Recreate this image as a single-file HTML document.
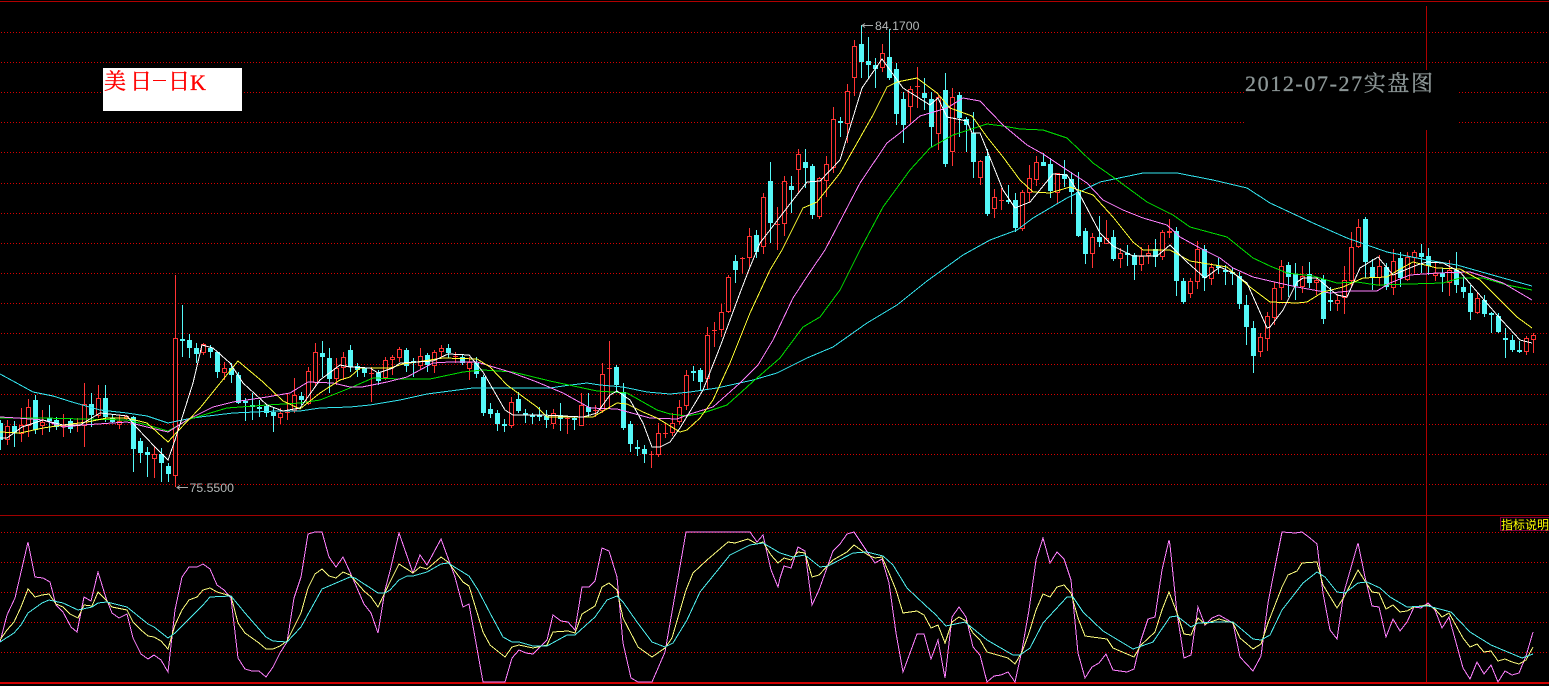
<!DOCTYPE html>
<html>
<head>
<meta charset="utf-8">
<style>
html,body{margin:0;padding:0;background:#000;width:1549px;height:686px;overflow:hidden}
svg{display:block;position:absolute;left:0;top:0}
.l{fill:none;stroke-width:1;shape-rendering:crispEdges}
.s{font-family:"Liberation Sans",sans-serif;font-size:12.3px;fill:#b4b8b8}
</style>
</head>
<body>
<svg width="1549" height="686" viewBox="0 0 1549 686" xmlns="http://www.w3.org/2000/svg">
<rect width="1549" height="686" fill="#000"/>
<g stroke="#d80000" stroke-width="1" stroke-dasharray="1 2" shape-rendering="crispEdges" fill="none">
<path d="M1 32.5H1549M1 62.5H1549M1 92.5H1549M1 122.5H1549M1 152.5H1549M1 183.5H1549M1 213.5H1549M1 243.5H1549M1 273.5H1549M1 303.5H1549M1 333.5H1549M1 364.5H1549M1 394.5H1549M1 424.5H1549M1 454.5H1549M1 484.5H1549M1 532.5H1549M1 562.5H1549M1 592.5H1549M1 622.5H1549M1 652.5H1549"/>
</g>
<path d="M0 1.5H1549" stroke="#b00000" shape-rendering="crispEdges"/>
<path d="M0 515.5H1549" stroke="#a00000" shape-rendering="crispEdges"/>
<rect x="0" y="682" width="1549" height="2" fill="#d00000"/>
<path d="M1426.5 6V682" stroke="#b00000" shape-rendering="crispEdges"/>
<g id="candles" shape-rendering="crispEdges"></g>

<polyline class="l" stroke="#33e6f0" points="0,374 13,381 33,392 53,396 72,402 100,410 127,413 147,416 168,423 187,419 200,417 233,413 277,411 300,411 320,408 350,407 370,405 400,400 427,394 450,391 473,388 550,388 563,386 587,383 600,385 623,387 647,392 670,394 690,392 717,388 753,380 777,373 807,358 833,347 867,323 897,305 927,281 963,255 990,240 1017,230 1033,218 1067,198 1100,182 1143,173 1177,173 1213,180 1247,188 1270,203 1313,223 1347,238 1387,252 1427,260 1457,265 1503,278 1532,286"/>
<polyline class="l" stroke="#00e000" points="0,418 43,418 83,419 127,420 147,425 168,431 190,419 227,408 267,405 300,403 320,400 350,388 373,378 400,379 430,379 463,372 483,370 513,372 550,381 597,391 627,393 657,410 670,414 687,416 703,413 727,405 757,378 780,358 803,327 820,317 840,290 860,250 883,207 910,170 930,148 953,135 987,124 1003,126 1020,129 1043,130 1067,138 1093,163 1113,177 1147,202 1173,215 1190,227 1227,237 1253,258 1270,266 1287,273 1313,276 1337,283 1357,282 1377,285 1410,284 1443,283 1460,278 1483,278 1507,285 1532,290"/>
<polyline class="l" stroke="#ff80ff" points="0,417 17,418 43,420 63,427 83,425 127,422 147,427 168,432 187,420 213,407 233,402 267,397 290,393 308,382 333,383 350,387 362,387 387,382 407,377 433,363 450,362 477,362 510,372 537,382 563,393 590,408 617,409 650,418 677,419 690,414 713,407 740,383 758,365 773,340 793,298 810,272 825,250 860,183 887,143 900,133 920,116 947,108 963,98 980,101 1003,125 1027,145 1043,154 1067,170 1087,183 1103,200 1123,210 1143,218 1167,225 1180,237 1200,248 1220,258 1233,268 1253,277 1270,281 1297,287 1330,293 1350,291 1377,291 1390,283 1410,275 1437,273 1470,272 1503,283 1532,300"/>
<polyline class="l" stroke="#ffff33" points="0,432 20,433 43,428 63,425 87,422 107,418 127,418 147,423 168,442 177,432 200,408 238,361 263,382 283,401 300,409 320,393 340,380 350,377 360,368 390,368 403,364 443,358 477,359 490,367 507,385 537,407 547,417 593,417 617,403 627,404 643,412 657,418 680,432 687,430 700,418 713,400 730,363 750,313 770,270 782,250 803,208 817,202 840,173 873,115 887,87 897,82 917,78 937,93 950,108 972,116 987,137 1003,157 1020,180 1033,192 1050,193 1070,187 1093,195 1113,217 1133,242 1143,250 1170,250 1190,261 1227,267 1250,287 1270,302 1297,303 1307,302 1323,292 1343,287 1363,278 1387,277 1400,269 1413,262 1437,268 1460,269 1480,280 1517,317 1532,328"/>
<polyline class="l" stroke="#ffffff" points="0,438 7,438 22,427 43,420 63,425 80,425 100,413 127,416 137,428 155,447 168,460 175,440 193,383 202,345 213,348 230,363 243,383 267,405 283,411 300,408 320,380 340,365 350,367 370,368 378,373 393,368 400,363 433,361 448,354 469,355 483,372 505,410 513,415 543,415 583,417 597,413 610,395 617,391 630,400 643,423 652,447 660,447 670,442 680,428 703,390 720,347 740,293 750,267 760,243 793,200 807,182 820,181 840,160 862,88 882,59 903,88 930,105 938,98 947,117 967,121 972,133 980,133 1003,190 1015,208 1030,202 1053,174 1067,175 1080,195 1100,233 1113,246 1133,256 1157,256 1170,245 1187,262 1205,278 1220,267 1233,273 1247,283 1267,328 1270,327 1283,310 1297,282 1303,278 1317,278 1337,295 1347,297 1360,268 1378,257 1393,275 1417,265 1427,262 1443,263 1460,272 1497,315 1520,340 1532,343"/>

<polyline class="l" stroke="#ff80ff" points="0,642 7,615 15,598 28,542 35,577 43,578 50,582 56,605 63,612 71,627 77,632 84,597 91,601 98,572 106,598 112,613 119,618 127,614 133,638 141,654 148,659 154,655 161,660 168,672 175,610 182,577 189,567 197,567 203,564 210,569 217,585 224,590 231,598 238,658 245,669 252,671 259,671 266,677 273,667 280,653 287,642 294,598 301,577 308,534 315,532 322,532 329,557 336,567 343,557 350,572 357,588 364,604 371,613 378,633 385,590 390,571 399,533 413,573 420,555 427,565 441,539 448,558 455,577 463,607 469,604 483,682 505,682 512,658 519,650 526,653 533,654 547,640 553,615 561,621 568,622 575,630 582,587 589,587 595,581 602,548 609,551 617,577 623,643 631,678 638,682 652,682 665,652 686,532 750,532 757,542 763,535 771,570 778,587 780,578 784,566 791,568 798,547 805,551 812,605 819,590 833,551 840,544 847,534 854,532 868,553 875,563 882,559 889,583 896,633 903,672 917,634 924,634 931,659 938,640 945,678 952,617 959,607 966,617 973,647 980,655 987,682 994,676 1001,675 1008,672 1015,682 1022,650 1029,610 1036,560 1043,538 1050,563 1057,552 1064,559 1071,580 1078,653 1085,678 1092,667 1099,663 1106,654 1113,670 1127,672 1134,669 1141,640 1148,619 1155,617 1162,570 1169,540 1170,545 1177,613 1184,658 1191,655 1198,607 1205,625 1212,618 1219,615 1226,619 1233,623 1240,657 1253,671 1261,656 1268,603 1275,567 1282,532 1295,533 1302,532 1310,538 1317,544 1323,593 1330,630 1337,639 1344,592 1358,543 1365,577 1372,606 1379,607 1386,637 1393,619 1400,631 1407,622 1414,607 1421,608 1428,603 1435,610 1442,628 1449,617 1463,668 1470,679 1477,662 1484,674 1491,665 1498,682 1505,671 1512,675 1519,673 1526,656 1533,632"/>
<polyline class="l" stroke="#ffff80" points="0,640 7,630 14,622 21,607 28,589 35,597 42,595 49,594 56,604 63,607 70,614 78,618 84,605 92,606 98,592 106,600 112,607 127,610 133,622 141,630 148,636 154,637 161,641 168,649 175,625 182,610 189,600 197,597 203,590 210,588 217,592 231,596 238,623 245,633 252,638 259,643 266,649 273,649 280,646 287,641 294,627 301,613 308,588 315,574 322,569 329,576 336,578 343,572 350,575 357,583 364,591 371,597 378,607 390,582 399,564 413,573 420,567 427,569 441,557 448,562 463,582 469,586 483,632 490,645 505,657 512,647 519,645 533,648 547,645 553,632 568,631 575,633 582,614 595,606 602,587 609,583 617,590 623,618 638,647 652,657 665,648 672,638 686,590 693,573 707,560 728,542 735,543 748,539 757,544 763,542 771,555 778,563 784,558 791,560 798,552 805,553 812,577 819,575 833,560 847,552 854,545 868,555 875,558 882,557 889,573 896,590 903,613 917,611 924,615 931,628 938,625 945,643 952,622 959,617 966,621 973,633 980,640 987,652 1008,658 1015,664 1022,652 1029,633 1036,610 1043,594 1050,597 1057,587 1064,585 1071,593 1078,618 1085,636 1107,639 1113,648 1134,657 1141,645 1155,632 1162,610 1169,592 1177,613 1184,634 1191,635 1198,618 1205,624 1219,619 1233,623 1240,638 1253,649 1261,644 1268,623 1282,587 1288,575 1297,571 1302,563 1317,562 1323,585 1337,608 1344,597 1358,570 1372,592 1379,593 1386,609 1393,605 1400,612 1407,611 1414,607 1428,605 1435,609 1442,617 1449,613 1463,638 1470,647 1477,644 1484,652 1491,651 1498,661 1505,659 1512,662 1519,664 1526,660 1533,647"/>
<polyline class="l" stroke="#50f0f0" points="0,642 14,633 21,625 28,613 42,603 49,600 63,603 78,610 92,607 98,603 107,602 127,607 148,624 154,627 168,638 175,633 203,605 210,597 231,596 245,613 266,637 273,641 287,642 301,627 322,589 350,577 355,578 378,593 385,593 390,590 399,580 407,576 413,576 427,572 441,564 448,563 469,576 478,590 490,613 503,637 512,642 519,642 533,646 547,646 567,635 575,635 595,617 607,600 617,596 623,602 637,622 652,642 665,647 673,643 687,620 700,592 730,555 750,545 763,543 780,553 793,557 805,555 820,567 828,566 853,553 867,552 883,556 893,565 907,588 925,605 935,614 946,626 965,622 987,640 1013,655 1020,655 1030,648 1043,623 1067,597 1073,597 1083,612 1103,631 1133,649 1153,642 1170,617 1177,616 1191,627 1198,623 1219,622 1233,622 1253,639 1261,640 1270,635 1282,610 1303,583 1317,572 1325,577 1337,592 1345,593 1358,583 1367,582 1380,588 1390,597 1407,607 1428,606 1451,612 1470,632 1491,645 1522,658 1533,654"/>

<rect x="103" y="68" width="139" height="43" fill="#fff"/>
<g font-family="'Liberation Serif','Noto Serif CJK SC',serif" font-size="22" fill="#ff0000" stroke="#ff0000" stroke-width="0.35">
<text x="104" y="89">美</text>
<text x="130" y="89">日</text>
<rect x="153" y="80" width="13" height="1" stroke="none"/>
<text x="168" y="89">日</text>
<text x="190" y="90" font-size="22">K</text>
</g>

<rect x="1244" y="70" width="215" height="60" fill="#000"/>
<text x="1245" y="91" font-family="'Liberation Serif','Noto Serif CJK SC',serif" font-size="22" fill="#8c9696" stroke="#8c9696" stroke-width="0.3" textLength="188" lengthAdjust="spacing">2012-07-27实盘图</text>

<path d="M873 25.5H862M865 23.5L862 25.5L865 27.5" stroke="#a8acac" fill="none"/>
<text class="s" x="875" y="30">84.1700</text>
<path d="M188 487.5H177M180 485.5L177 487.5L180 489.5" stroke="#a8acac" fill="none"/>
<text class="s" x="189.5" y="492">75.5500</text>

<rect x="1500.5" y="517.5" width="60" height="13" fill="#000" stroke="#800040"/>
<text x="1501" y="529" font-family="'Liberation Sans','Noto Sans CJK SC',sans-serif" font-size="12" fill="#ffff00">指标说明</text>
</svg>
<script>
var d="c420 423 440 450,r420 426 439 445,c421 426 433 447,r408 425 433 442,r399 407 425 437,c395 400 430 434,r410 422 425 435,c405 418 421 432,c417 420 427 430,r414 425 426 437,c418 421 429 433,r418 425 425 432,r383 404 425 447,c393 404 415 427,r385 398 415 418,c385 398 417 422,c415 418 422 423,r415 421 424 429,r415 416 418 420,c416 417 449 472,c438 441 453 463,c447 452 455 477,r447 454 458 478,c448 454 463 482,c463 466 474 482,r275 338 475 487,c305 339 341 357,c334 340 348 358,c343 348 354 363,r343 344 352 355,c345 348 352 358,c352 352 372 378,r362 368 372 380,c363 368 375 383,c372 375 403 404,c398 401 403 421,c393 405 407 420,c400 407 408 417,c405 406 413 417,c408 412 416 432,r408 413 417 424,r393 412 412 420,r378 395 410 413,c392 396 400 405,r367 371 403 405,r343 352 382 387,c341 353 357 377,c348 358 379 393,r358 368 378 385,r352 357 367 380,c345 350 367 372,c363 366 370 377,c367 368 373 377,r367 373 373 402,c370 373 381 385,r357 360 377 380,r355 357 359 375,r347 349 357 362,c348 350 366 372,c358 361 363 377,r348 356 365 370,c353 355 365 372,r350 352 365 373,r345 348 351 357,c344 348 353 358,r352 356 356 363,c355 357 363 365,r357 362 368 380,c357 363 374 378,c375 377 413 416,c403 409 414 418,c410 413 424 431,c419 424 426 432,r397 402 425 428,c392 399 411 413,c409 413 415 423,c413 415 417 424,c407 415 417 421,c410 416 420 428,r409 413 423 429,c403 415 419 431,r416 418 418 434,c417 418 420 430,r393 405 425 426,c393 407 412 417,r405 410 410 417,r363 374 410 413,r341 368 368 408,c365 367 385 392,c383 392 428 430,c421 424 444 452,c440 447 449 456,c445 449 454 463,r451 454 454 468,r423 433 454 457,r423 433 433 438,r413 423 432 436,r400 407 421 425,r370 375 405 410,c366 371 373 381,c368 370 382 390,r327 335 378 390,r322 330 330 347,r304 312 329 337,r275 277 311 313,c255 261 270 283,r257 258 258 274,r228 236 257 267,c230 235 252 258,r193 197 246 254,c162 181 223 243,r207 224 224 250,r176 181 223 236,c176 186 190 213,r149 154 169 193,c149 162 168 188,c164 166 215 219,r177 178 216 219,r156 164 180 197,r107 119 167 173,c117 121 123 137,r84 91 123 143,r40 46 77 96,c25 44 62 78,c37 61 65 78,c58 65 69 88,r44 53 67 72,c29 57 78 80,c63 69 114 125,c92 99 125 143,r86 89 106 123,r67 86 86 108,c78 93 98 110,c92 99 127 147,r95 97 133 150,c73 90 164 167,r88 97 151 166,c92 95 118 137,c117 119 125 152,c112 133 162 178,r160 161 177 185,c149 156 214 216,r189 197 208 218,r188 200 200 210,c185 200 202 204,c193 200 228 232,r190 192 228 231,r165 178 192 202,r156 162 179 186,c153 162 166 166,c158 164 191 198,r173 173 192 204,c160 174 179 187,c172 179 192 214,c172 192 236 237,c228 231 254 264,r233 237 253 268,c216 237 242 247,r220 238 243 243,c230 237 259 261,r248 253 258 268,c245 253 255 266,c253 255 265 280,r247 256 264 271,r245 253 255 264,c239 249 257 267,r230 232 256 260,r219 231 232 238,c227 231 281 296,c278 281 302 304,r278 281 293 298,r241 249 281 289,c245 249 278 291,r263 267 278 285,c258 266 268 274,c265 270 272 285,c267 272 274 285,c272 276 304 309,c295 305 327 345,c321 328 356 373,r333 337 351 357,r312 316 338 351,r282 288 317 325,r260 266 287 300,c262 265 277 297,c263 274 286 300,r266 276 286 293,c262 274 283 288,r278 280 282 295,c275 279 319 324,c287 300 302 311,r294 300 303 311,r266 280 297 314,r232 247 280 288,r219 227 246 248,c217 219 262 278,c259 267 277 290,r255 266 277 286,c263 267 287 290,r249 261 287 295,c252 258 278 287,r252 257 279 281,r250 252 257 273,c244 253 257 273,c248 256 266 275,r262 273 275 281,c268 273 277 292,r260 270 282 296,c252 270 285 293,c277 287 292 298,c285 293 312 320,r293 298 312 314,c295 300 314 317,c312 313 315 333,c313 316 332 333,c328 338 340 358,c335 340 350 352,c341 350 352 353,r336 338 351 355,r333 335 339 353".split(",");
var s="";
d.forEach(function(e,i){
 var c=e[0],p=e.slice(1).split(" ").map(Number),x=7*i,C=c=="c"?"#55f8f8":"#ff3333",h=p[0],t=p[1],b=p[2],l=p[3];
 s+='<rect x="'+x+'" y="'+h+'" width="1" height="'+(l-h)+'" fill="'+C+'"/>';
 if(c=="c"){
  if(b-t<2)b=t+2;
  s+='<rect x="'+(x-2)+'" y="'+t+'" width="5" height="'+(b-t)+'" fill="'+C+'"/>';
 }else if(b-t<1){
  s+='<rect x="'+(x-2)+'" y="'+t+'" width="5" height="1" fill="'+C+'"/>';
 }else{
  s+='<rect x="'+(x-1.5)+'" y="'+(t+.5)+'" width="4" height="'+(b-t)+'" fill="#000" stroke="'+C+'"/>';
 }
});
document.getElementById("candles").innerHTML=s;
</script>
</body>
</html>
